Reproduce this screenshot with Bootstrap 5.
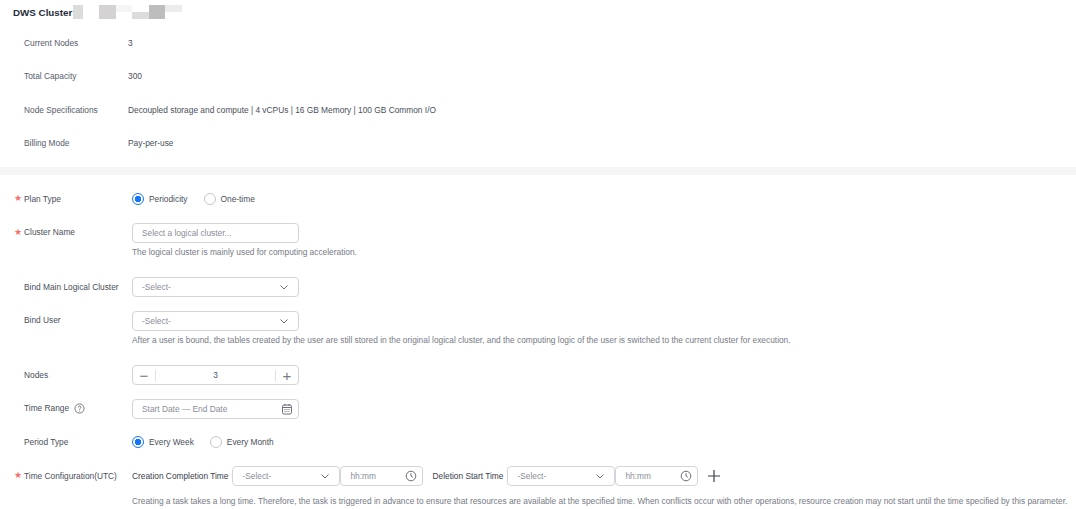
<!DOCTYPE html>
<html lang="en">
<head>
  <meta charset="UTF-8">
  <title>DWS Cluster</title>
  <link href="https://cdn.jsdelivr.net/npm/bootstrap@5.3.2/dist/css/bootstrap.min.css" rel="stylesheet">
  <style>
    body { font-family: "Liberation Sans", Arial, sans-serif; font-size: 8.35px; color: #575d6c; background: #fff; overflow: hidden; }
    .top-title { padding: 7px 0 0 13px; height: 27px; font-size: 9.8px; font-weight: 700; color: #252b3a; line-height: 12px; }
    .mask-row { margin: -2px 0 0 1px; }
    .mask-box { display: block; height: 14px; width: 16.5px; }
    .mask-a { width: 10px; background: #dcdcdc; }
    .mask-gap { width: 16px; }
    .mask-b { background: #d4d2d2; }
    .mask-c { background: #f5f5f5; height: 7px; }
    .mask-d { background: linear-gradient(#fff 50%, #dcdcdc 50%); }
    .mask-e { background: #bdbdbd; }
    .mask-f { background: #ececec; height: 7px; }
    .info-row { height: 33.4px; line-height: 33.4px; padding-left: 24px; }
    .info-label { width: 104px; flex: none; }
    .info-value { color: #4a4f5b; }
    .band { height: 8px; background: #f5f5f5; margin-top: 6px; margin-bottom: 14.4px; }
    .frm-row { min-height: 20px; margin-bottom: 13.6px; align-items: center; }
    .frm-label { width: 132px; flex: none; padding-left: 24px; position: relative; color: #4a4f5b; }
    .req::before { content: "★"; position: absolute; left: 14px; top: 50%; transform: translateY(-50%); color: #f66f6a; font-size: 9px; font-family: "DejaVu Sans", sans-serif; }
    .ctl { height: 20px; width: 167px; border: 1px solid #d3d5da; border-radius: 4px; font-size: 8.35px; padding: 0 9px; color: #8a8e99; background-color: #fff; box-shadow: none; line-height: 18px; }
    .ctl::placeholder { color: #8a8e99; opacity: 1; }
    .form-select.ctl { background-image: none; padding-right: 20px; }
    .ctl-sel { width: 108px; }
    .ctl-time { width: 83px; }
    .ctl-wrap { position: relative; display: inline-block; flex: none; }
    .ctl-icon { position: absolute; right: 6px; top: 4px; width: 12px; height: 12px; pointer-events: none; }
    .ic-chevron { right: 9px; }
    .hint { margin: 3px 0 19.5px 132px; line-height: 12px; color: #777b86; white-space: nowrap; }
    .hint-last { margin-top: 9px; margin-bottom: 0; }
    .radio-opt { margin: 0; padding: 0; min-height: 0; align-items: center; gap: 5px; color: #4a4f5b; }
    .radio-opt .form-check-input { float: none; margin: 0; width: 12px; height: 12px; border-color: #c4c6cc; }
    .radio-opt .form-check-input:checked { background-color: #fff; border-color: #1476ff; background-image: radial-gradient(circle, #1476ff 3px, transparent 3.5px); }
    .stepper { width: 167px; height: 20px; border: 1px solid #d3d5da; border-radius: 4px; color: #4a4f5b; }
    .step-btn { width: 22px; color: #777b86; font-size: 15px; line-height: 1; }
    .step-val { border-left: 1px solid #dfe1e6; border-right: 1px solid #dfe1e6; height: 11px; line-height: 11px; }
    .help-ic { width: 11px; height: 11px; margin-left: 5px; vertical-align: -2.5px; }
    .add-ic { width: 14px; height: 14px; margin-left: 9px; }
    .time-lbl { white-space: nowrap; color: #3c414d; }
    .time-lbl-next { margin-left: 9px; }
  </style>
</head>
<body>
  <div class="top-title d-flex">
    <span>DWS Cluster</span>
    <span class="mask-row d-flex">
      <span class="mask-box mask-a"></span>
      <span class="mask-box mask-gap"></span>
      <span class="mask-box mask-b"></span>
      <span class="mask-box mask-c"></span>
      <span class="mask-box mask-d"></span>
      <span class="mask-box mask-e"></span>
      <span class="mask-box mask-f"></span>
    </span>
  </div>

  <div class="info-row d-flex"><div class="info-label">Current Nodes</div><div class="info-value">3</div></div>
  <div class="info-row d-flex"><div class="info-label">Total Capacity</div><div class="info-value">300</div></div>
  <div class="info-row d-flex"><div class="info-label">Node Specifications</div><div class="info-value">Decoupled storage and compute | 4 vCPUs | 16 GB Memory | 100 GB Common I/O</div></div>
  <div class="info-row d-flex"><div class="info-label">Billing Mode</div><div class="info-value">Pay-per-use</div></div>

  <div class="band"></div>

  <form>
    <div class="frm-row d-flex">
      <div class="frm-label req">Plan Type</div>
      <label class="form-check radio-opt d-flex me-3"><input class="form-check-input" type="radio" name="plan" checked>Periodicity</label>
      <label class="form-check radio-opt d-flex"><input class="form-check-input" type="radio" name="plan">One-time</label>
    </div>

    <div class="frm-row d-flex mb-0">
      <div class="frm-label req">Cluster Name</div>
      <input class="form-control ctl" type="text" placeholder="Select a logical cluster...">
    </div>
    <div class="hint">The logical cluster is mainly used for computing acceleration.</div>

    <div class="frm-row d-flex">
      <div class="frm-label">Bind Main Logical Cluster</div>
      <div class="ctl-wrap">
        <select class="form-select ctl"><option>-Select-</option></select>
        <svg class="ctl-icon ic-chevron" viewBox="0 0 12 12" fill="none" stroke="#6b6f7a" stroke-width="1"><path d="M2.5 4.5 6 8l3.5-3.5"/></svg>
      </div>
    </div>

    <div class="frm-row d-flex mb-0">
      <div class="frm-label">Bind User</div>
      <div class="ctl-wrap">
        <select class="form-select ctl"><option>-Select-</option></select>
        <svg class="ctl-icon ic-chevron" viewBox="0 0 12 12" fill="none" stroke="#6b6f7a" stroke-width="1"><path d="M2.5 4.5 6 8l3.5-3.5"/></svg>
      </div>
    </div>
    <div class="hint">After a user is bound, the tables created by the user are still stored in the original logical cluster, and the computing logic of the user is switched to the current cluster for execution.</div>

    <div class="frm-row d-flex">
      <div class="frm-label">Nodes</div>
      <div class="stepper d-flex align-items-center text-center">
        <div class="step-btn">−</div>
        <div class="step-val flex-grow-1">3</div>
        <div class="step-btn">+</div>
      </div>
    </div>

    <div class="frm-row d-flex">
      <div class="frm-label">Time Range<svg class="help-ic" viewBox="0 0 12 12" fill="none" stroke="#6b6f7a" stroke-width="1"><circle cx="6" cy="6" r="5"/><path d="M4.5 4.8a1.5 1.5 0 1 1 2.2 1.3c-.5.3-.7.6-.7 1.1M6 8.4v.8"/></svg></div>
      <div class="ctl-wrap">
        <input class="form-control ctl" type="text" placeholder="Start Date — End Date">
        <svg class="ctl-icon" viewBox="0 0 12 12" fill="none" stroke="#6b6f7a" stroke-width="1"><rect x="1.5" y="2" width="9" height="9" rx="1.5"/><path d="M1.5 4.5h9M4 1v2M8 1v2M3.5 6.5h1M5.5 6.5h1M7.5 6.5h1M3.5 8.5h1M5.5 8.5h1M7.5 8.5h1"/></svg>
      </div>
    </div>

    <div class="frm-row d-flex">
      <div class="frm-label">Period Type</div>
      <label class="form-check radio-opt d-flex me-3"><input class="form-check-input" type="radio" name="period" checked>Every Week</label>
      <label class="form-check radio-opt d-flex"><input class="form-check-input" type="radio" name="period">Every Month</label>
    </div>

    <div class="frm-row d-flex mb-0">
      <div class="frm-label req">Time Configuration(UTC)</div>
      <span class="time-lbl me-1">Creation Completion Time</span>
      <div class="ctl-wrap">
        <select class="form-select ctl ctl-sel"><option>-Select-</option></select>
        <svg class="ctl-icon ic-chevron" viewBox="0 0 12 12" fill="none" stroke="#6b6f7a" stroke-width="1"><path d="M2.5 4.5 6 8l3.5-3.5"/></svg>
      </div>
      <div class="ctl-wrap">
        <input class="form-control ctl ctl-time" type="text" placeholder="hh:mm">
        <svg class="ctl-icon" viewBox="0 0 12 12" fill="none" stroke="#6b6f7a" stroke-width="1"><circle cx="6" cy="6" r="4.8"/><path d="M6 3.2V6l1.8 1.2"/></svg>
      </div>
      <span class="time-lbl time-lbl-next me-1">Deletion Start Time</span>
      <div class="ctl-wrap">
        <select class="form-select ctl ctl-sel"><option>-Select-</option></select>
        <svg class="ctl-icon ic-chevron" viewBox="0 0 12 12" fill="none" stroke="#6b6f7a" stroke-width="1"><path d="M2.5 4.5 6 8l3.5-3.5"/></svg>
      </div>
      <div class="ctl-wrap">
        <input class="form-control ctl ctl-time" type="text" placeholder="hh:mm">
        <svg class="ctl-icon" viewBox="0 0 12 12" fill="none" stroke="#6b6f7a" stroke-width="1"><circle cx="6" cy="6" r="4.8"/><path d="M6 3.2V6l1.8 1.2"/></svg>
      </div>
      <svg class="add-ic" viewBox="0 0 14 14" fill="none" stroke="#3c414d" stroke-width="1.2"><path d="M7 1v12M1 7h12"/></svg>
    </div>
    <div class="hint hint-last">Creating a task takes a long time. Therefore, the task is triggered in advance to ensure that resources are available at the specified time. When conflicts occur with other operations, resource creation may not start until the time specified by this parameter.</div>
  </form>
</body>
</html>
